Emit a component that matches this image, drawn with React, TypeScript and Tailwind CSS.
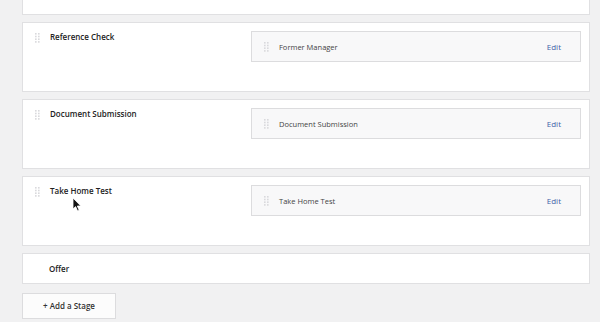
import React from 'react';

const stages = [
  { name: 'Reference Check', step: 'Former Manager' },
  { name: 'Document Submission', step: 'Document Submission' },
  { name: 'Take Home Test', step: 'Take Home Test' },
];

function Handle({ className = '' }: { className?: string }) {
  return (
    <svg width="5" height="10" viewBox="0 0 5 10" className={className} aria-hidden="true">
      {[0, 1, 2, 3].map((r) =>
        [0, 1].map((c) => (
          <rect key={`${r}-${c}`} x={c * 3} y={r * 2.7} width="1.6" height="1.6" fill="#d9d9dc" />
        ))
      )}
    </svg>
  );
}

function Cursor() {
  return (
    <svg width="10" height="15" viewBox="0 0 10 15" className="absolute left-[72px] top-[197px]" aria-hidden="true">
      <path d="M1 1 L1 12 L3.6 9.6 L5.6 14 L7.2 13.3 L5.3 9 L8.8 9 Z" fill="#111" stroke="#fff" strokeWidth="0.8" />
    </svg>
  );
}

export default function App() {
  return (
    <div
      className="relative w-[600px] h-[322px] overflow-hidden bg-[#f1f1f2] pl-[22px] pr-[10px]"
      style={{ fontFamily: '"Open Sans", "Liberation Sans", sans-serif' }}
    >
      <div className="flex flex-col gap-[7px]">
        {/* tail of previous stage */}
        <div className="h-[15px] bg-white border border-t-0 border-[#e0e0e2]" />

        {stages.map((stage) => (
          <div key={stage.name} className="h-[70px] bg-white border border-[#e0e0e2] flex">
            <div className="flex-1 flex items-start pt-[10px] pl-[12px]">
              <Handle />
              <span className="ml-[10px] -mt-[1px] text-[8px] font-semibold text-[#222] leading-[10px]">
                {stage.name}
              </span>
            </div>
            <div className="mt-[8px] mr-[8px] w-[330px] h-[31px] bg-[#f8f8f9] border border-[#dcdcde] flex items-center pl-[12px] pr-[19px]">
              <Handle />
              <span className="ml-[10px] flex-1 text-[7.5px] text-[#444] leading-[10px]">{stage.step}</span>
              <span className="text-[8px] text-[#3f60a8] leading-[10px]">Edit</span>
            </div>
          </div>
        ))}

        <div className="h-[31px] bg-white border border-[#e0e0e2] flex items-center pl-[26px]">
          <span className="text-[8px] font-semibold text-[#222]">Offer</span>
        </div>

        <div>
          <button className="w-[94px] h-[26px] bg-[#fcfcfc] border border-[#dcdcde] text-[8px] font-semibold text-[#333]">
            + Add a Stage
          </button>
        </div>
      </div>
      <Cursor />
    </div>
  );
}
